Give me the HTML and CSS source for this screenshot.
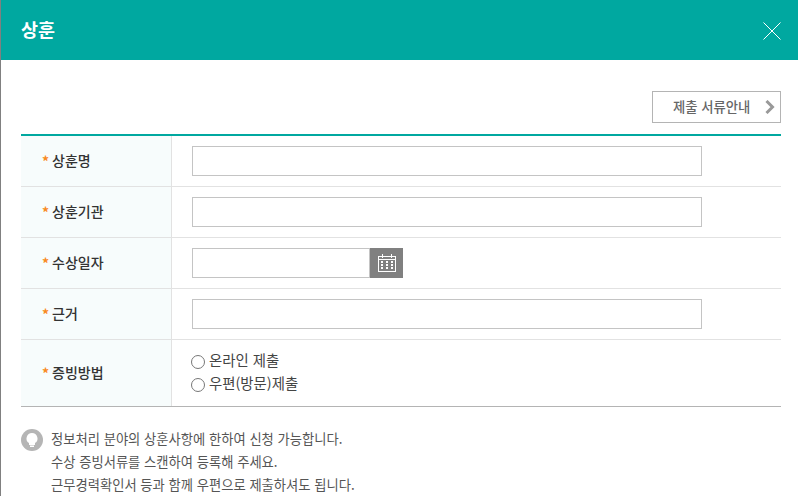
FILE: index.html
```html
<!DOCTYPE html>
<html lang="ko">
<head>
<meta charset="utf-8">
<title>상훈</title>
<link rel="stylesheet" href="styles.css">
</head>
<body>
<div class="modal">
  <header class="head">
    <h1 class="title">상훈</h1>
    <svg class="close" width="18" height="18" viewBox="0 0 18 18"><path d="M.5.5l17 17M17.500.5l-17 17" stroke="#fff" stroke-width="1" fill="none"/></svg>
  </header>
  <main class="body">
    <div class="tools">
      <a class="guide"><span class="guide-text">제출 서류안내</span>
        <svg class="chev" width="10" height="14" viewBox="0 0 10 14"><path d="M1.500 1l6 6-6 6" stroke="#999" stroke-width="3" fill="none"/></svg>
      </a>
    </div>
    <div class="form">
      <div class="row">
        <div class="label"><span class="star">*</span><span class="name">상훈명</span></div>
        <div class="field"><input class="text" type="text"></div>
      </div>
      <div class="row">
        <div class="label"><span class="star">*</span><span class="name">상훈기관</span></div>
        <div class="field"><input class="text" type="text"></div>
      </div>
      <div class="row">
        <div class="label"><span class="star">*</span><span class="name">수상일자</span></div>
        <div class="field">
          <input class="date" type="text">
          <span class="cal">
            <svg width="20" height="20" viewBox="0 0 20 20"><g fill="none" stroke="#fff"><rect x="1.500" y="3.500" width="17" height="15"/><path d="M1.500 6.500h17M5.500 1v4M14.500 1v4"/></g><g fill="#fff"><rect x="4" y="8" width="2" height="2"/><rect x="9" y="8" width="2" height="2"/><rect x="14" y="8" width="2" height="2"/><rect x="4" y="11" width="2" height="2"/><rect x="9" y="11" width="2" height="2"/><rect x="14" y="11" width="2" height="2"/><rect x="4" y="14" width="2" height="2"/><rect x="9" y="14" width="2" height="2"/><rect x="14" y="14" width="2" height="2"/></g></svg>
          </span>
        </div>
      </div>
      <div class="row">
        <div class="label"><span class="star">*</span><span class="name">근거</span></div>
        <div class="field"><input class="text" type="text"></div>
      </div>
      <div class="row last">
        <div class="label"><span class="star">*</span><span class="name">증빙방법</span></div>
        <div class="field radios">
          <label class="radio"><span class="dot"></span><span class="radio-text">온라인 제출</span></label>
          <label class="radio"><span class="dot"></span><span class="radio-text">우편(방문)제출</span></label>
        </div>
      </div>
    </div>
    <div class="note">
      <svg class="bulb" width="22" height="22" viewBox="0 0 22 22"><circle cx="11" cy="11" r="11" fill="#b5b5b5"/><path d="M11 4a5.500 5.500 0 0 0-3 10.100V16h6v-1.900A5.500 5.500 0 0 0 11 4z" fill="#fff"/><rect x="9" y="16.500" width="4" height="1.500" fill="#fff"/></svg>
      <div class="lines">
        <p>정보처리 분야의 상훈사항에 한하여 신청 가능합니다.</p>
        <p>수상 증빙서류를 스캔하여 등록해 주세요.</p>
        <p>근무경력확인서 등과 함께 우편으로 제출하셔도 됩니다.</p>
      </div>
    </div>
  </main>
</div>
</body>
</html>
```
FILE: styles.css
```css
* { box-sizing: border-box; }
html, body { margin: 0; padding: 0; background: #fff; height: 496px; overflow: hidden; }
body { font-family: "Noto Sans CJK KR", "Noto Sans", sans-serif; color: #333; }
.modal { border-left: 1px solid #808080; height: 496px; }
.head { height: 60px; background: #00a8a0; display: flex; align-items: center; justify-content: space-between; padding: 0 17px 0 20px; }
.title { margin: 0 0 2px; color: #fff; font-size: 18.500px; font-weight: 700; line-height: 58px; }
.close { display: block; margin-top: 2px; }
.body { padding: 31px 17px 0 20px; }
.tools { display: flex; justify-content: flex-end; margin-bottom: 11px; }
.guide { width: 129px; height: 32px; border: 1px solid #b4b4b4; display: flex; align-items: center; justify-content: space-between; padding: 0 5px 0 20px; font-size: 13.330px; font-weight: 500; color: #666; }
.guide-text { padding-bottom: 2px; }
.form { border-top: 2px solid #00a8a0; border-bottom: 1px solid #b4b4b4; }
.row { display: flex; height: 51px; border-bottom: 1px solid #e2e2e2; }
.row.last { height: 66px; border-bottom: 0; }
.label { width: 151px; background: #f7fcfc; border-right: 1px solid #e2e2e2; display: flex; align-items: center; padding-left: 21px; font-size: 14px; font-weight: 500; color: #333; }
.name { padding-bottom: 2px; }
.star { color: #f98a1e; font-weight: 700; width: 10px; font-size: 14px; }
.field { flex: 1; display: flex; align-items: center; padding-left: 20px; }
.text { width: 510px; height: 30px; border: 1px solid #c4c4c4; background: #fff; margin: 0; }
.date { width: 178px; height: 30px; border: 1px solid #c4c4c4; background: #fff; margin: 0; }
.cal { width: 33px; height: 30px; background: #808080; display: flex; align-items: center; justify-content: center; }
.radios { flex-direction: column; align-items: flex-start; justify-content: center; gap: 3px; padding-left: 19px; }
.radio { display: flex; align-items: center; height: 20px; font-size: 14.400px; color: #444; }
.radio-text { padding-bottom: 4px; }
.dot { width: 14px; height: 14px; border: 1px solid #777; border-radius: 50%; margin-right: 4px; background: #fff; }
.note { display: flex; margin-top: 22px; }
.bulb { display: block; margin-right: 8px; }
.lines { font-size: 13.300px; color: #555; }
.lines p { margin: 0; height: 23px; line-height: 20px; }
```
